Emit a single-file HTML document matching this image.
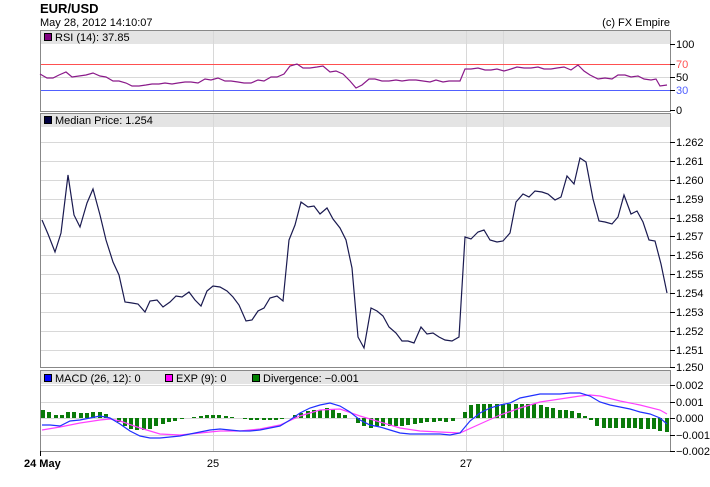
<!DOCTYPE html>
<html><head><meta charset="utf-8"><style>
body{margin:0;background:#fff;width:710px;height:487px;overflow:hidden}
svg{display:block}
text{font-family:"Liberation Sans",Arial,sans-serif;font-size:11px;fill:#000}
</style></head><body>
<svg id="s" width="710" height="487" xmlns="http://www.w3.org/2000/svg">
<text x="40" y="13" style="font-size:13px;font-weight:bold">EUR/USD</text>
<text x="40" y="26">May 28, 2012 14:10:07</text>
<text x="670" y="26" text-anchor="end">(c) FX Empire</text>
<g id="g"></g>
</svg>
<script>
var g=document.getElementById('g'),h='';
function panel(y0,y1){h+='<rect x="40.5" y="'+(y0+.5)+'" width="630" height="'+(y1-y0)+'" fill="#fff" stroke="#888"/>';
h+='<rect x="41" y="'+(y0+1)+'" width="629" height="13" fill="#e4e4e4"/>';
[213,466,503].forEach(function(x){h+='<line x1="'+(x+.5)+'" y1="'+(y0+1)+'" x2="'+(x+.5)+'" y2="'+y1+'" stroke="#d8d8d8"/>';});}
function hl(y,c){h+='<line x1="41" x2="670" y1="'+(y+.5)+'" y2="'+(y+.5)+'" stroke="'+(c||'#d8d8d8')+'"/>';}
function lab(y,t,c){h+='<line x1="670" x2="675" y1="'+(y+.5)+'" y2="'+(y+.5)+'" stroke="#000"/><text x="676" y="'+(y+4)+'"'+(c?' style="fill:'+c+'"':'')+'>'+t+'</text>';}
function pl(p,c,w){h+='<polyline fill="none" stroke="'+c+'" stroke-width="'+(w||1.2)+'" points="'+p.join(' ')+'"/>';}
function leg(x,y,c,t){h+='<rect x="'+(x+.5)+'" y="'+(y+.5)+'" width="7" height="7" fill="'+c+'" stroke="#000"/><text x="'+(x+11)+'" y="'+(y+8)+'">'+t+'</text>';}
panel(30,111);
hl(77);hl(64,'#ff5050');hl(90,'#5060ff');
lab(44,'100');lab(64,'70','#ff5050');lab(77,'50');lab(90,'30','#5060ff');lab(110,'0');
pl([40,74,47,78,53,78,59,75,66,72,72,77,79,76,86,75,93,73,100,76,106,77,113,81,119,81,126,83,132,86,139,86,146,85,152,84,159,84,165,83,172,84,178,83,185,82,191,82,198,83,205,79,211,80,218,78,225,81,231,81,238,82,244,83,251,83,258,80,264,81,271,77,277,77,284,74,290,66,297,64,303,68,310,68,317,67,323,66,330,72,336,71,343,74,350,81,356,88,362,85,369,79,375,79,382,81,389,81,396,80,402,81,409,80,416,80,423,81,430,82,436,80,443,82,449,81,456,81,460,81,465,69,471,69,478,68,485,70,491,70,497,69,504,71,511,69,517,67,524,68,531,68,538,67,544,69,551,69,557,68,564,67,571,70,578,65,584,71,590,75,598,79,605,78,612,79,618,75,625,75,631,77,638,76,644,79,651,80,656,79,660,86,667,85],'#8a1a8a');
leg(44,33,'#800080','RSI (14): 37.85');
panel(113,367);
var L=['1.262','1.261','1.260','1.259','1.258','1.257','1.256','1.255','1.254','1.253','1.252','1.251'];
for(var i=0;i<12;i++){var y=Math.round(142+i*18.88);hl(y);lab(y,L[i]);}
lab(367,'1.250');
pl([42,220,48,234,55,252,61,233,68,175,74,215,80,227,87,203,93,189,100,215,106,240,113,262,119,275,125,302,132,303,138,304,145,312,150,301,157,300,163,307,170,302,176,296,182,297,189,292,195,300,201,306,207,291,213,286,220,287,227,291,233,297,239,305,246,321,252,320,258,311,264,308,270,298,277,296,283,301,289,240,295,225,301,202,308,207,314,206,320,214,327,208,333,219,340,228,346,240,352,268,358,337,364,348,371,308,377,311,383,316,389,327,396,333,402,341,408,341,414,343,421,327,427,334,433,333,439,337,445,340,452,341,459,337,465,237,471,239,478,232,484,230,490,240,497,242,503,241,510,233,516,202,523,194,529,197,535,191,542,192,548,194,555,200,561,197,567,176,574,184,580,158,586,162,593,199,599,221,605,222,612,224,618,217,624,195,631,214,637,211,643,222,649,240,655,241,661,264,667,293],'#1a1a50');
leg(44,116,'#000040','Median Price: 1.254');
panel(370,451);
[385,402,418,435].forEach(function(y){hl(y)});
lab(385,'0.002');lab(402,'0.001');lab(418,'0.000');lab(435,'−0.001');lab(451,'−0.002');
var B=[42,425,50,425,60,426,70,421,80,420,90,418,100,416,110,418,120,424,130,431,140,436,150,438,160,438,170,437,180,436,190,434,200,432,210,430,220,429,230,430,240,431,250,431,260,430,270,428,280,426,290,420,300,413,310,408,320,405,330,403,340,406,350,412,360,420,370,425,380,427,390,430,400,433,410,434,420,434,430,434,440,434,450,435,460,433,470,421,480,413,490,408,500,405,510,403,520,398,530,396,540,394,550,394,560,394,570,393,580,393,590,396,600,402,610,405,620,407,630,409,640,412,650,414,660,418,667,424];
var P=[42,430,60,427,80,423,100,420,110,419,120,421,140,428,160,434,180,435,200,433,220,431,240,431,260,429,280,425,300,416,320,410,340,409,360,416,380,422,400,428,420,431,440,432,460,433,480,424,500,415,520,408,540,402,560,399,580,396,590,395,600,396,620,401,640,405,660,410,667,414];
function at(a,x){for(var i=0;i<a.length-2;i+=2){if(x<=a[i+2]){var t=(x-a[i])/(a[i+2]-a[i]);return a[i+1]+t*(a[i+3]-a[i+1]);}}return a[a.length-1];}
for(var x=41;x<668;x+=6.3){var d=Math.round(1.6*(at(P,x+2)-at(B,x+2)));if(Math.abs(d)<1)continue;var hh=Math.min(Math.abs(d),14);
h+='<rect x="'+Math.round(x)+'" y="'+(d>0?418-hh:418)+'" width="4" height="'+hh+'" fill="#0a7a0a"/>';}
pl(P,'#ff40ff');pl(B,'#2030ff');
leg(44,374,'#0000ff','MACD (26, 12): 0');leg(165,374,'#ff00ff','EXP (9): 0');leg(252,374,'#008000','Divergence: −0.001');
h+='<line x1="40.5" x2="40.5" y1="451" y2="456" stroke="#000"/>';
h+='<text x="24" y="467" style="font-weight:bold">24 May</text><text x="213" y="467" text-anchor="middle">25</text><text x="466" y="467" text-anchor="middle">27</text>';
g.innerHTML=h;
</script>
</body></html>
